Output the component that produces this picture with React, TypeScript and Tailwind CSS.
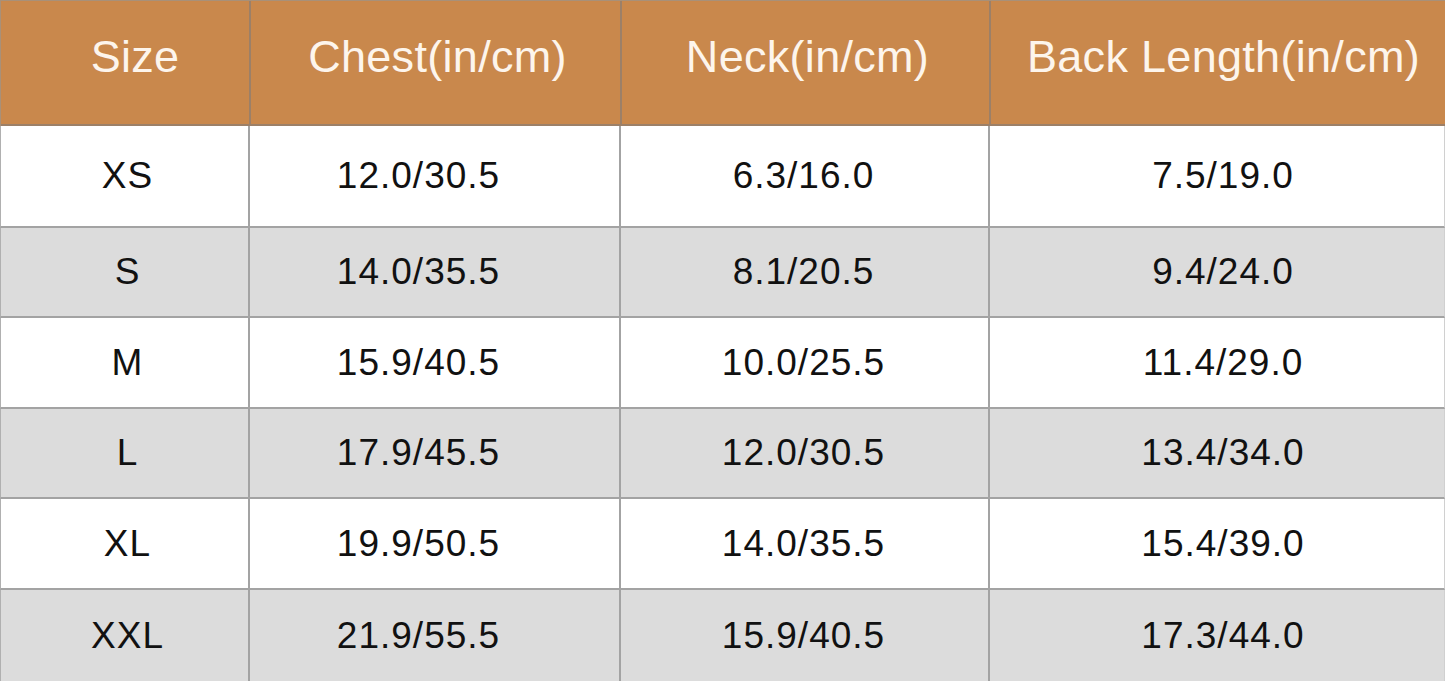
import React from 'react';

const headers = ['Size', 'Chest(in/cm)', 'Neck(in/cm)', 'Back Length(in/cm)'];

const rows: { cells: string[]; h: string }[] = [
  { cells: ['XS', '12.0/30.5', '6.3/16.0', '7.5/19.0'], h: 'h-[102px]' },
  { cells: ['S', '14.0/35.5', '8.1/20.5', '9.4/24.0'], h: 'h-[90px]' },
  { cells: ['M', '15.9/40.5', '10.0/25.5', '11.4/29.0'], h: 'h-[91px]' },
  { cells: ['L', '17.9/45.5', '12.0/30.5', '13.4/34.0'], h: 'h-[90px]' },
  { cells: ['XL', '19.9/50.5', '14.0/35.5', '15.4/39.0'], h: 'h-[91px]' },
  { cells: ['XXL', '21.9/55.5', '15.9/40.5', '17.3/44.0'], h: 'h-[91px]' },
];

const cols = 'grid grid-cols-[250px_371px_369px_455px]';

// small nudges so the text sits where it does in the chart
const headPad = ['pl-[20px]', 'pl-[4px]', 'pl-[4px]', 'pl-[10px]'];
const bodyPad = ['pl-[6px]', 'pr-[32px]', 'pr-[2px]', 'pl-[12px]'];

const App: React.FC = () => {
  return (
    <div className="w-[1445px] h-[681px] overflow-hidden bg-white font-['Liberation_Sans',Arial,sans-serif]">
      {/* header */}
      <div className={`${cols} h-[126px] bg-[#c9884c] border-t border-l border-[#a89078]`}>
        {headers.map((h, i) => (
          <div
            key={h}
            className={`flex items-center justify-center pb-[12px] text-[45px] tracking-[0.3px] text-[#fdf5ec] border-b-2 border-[#9c8068] ${headPad[i]} ${
              i < 3 ? 'border-r-2' : ''
            }`}
          >
            {h}
          </div>
        ))}
      </div>

      {/* body */}
      {rows.map((r, ri) => (
        <div
          key={r.cells[0]}
          className={`${cols} ${r.h} ${ri % 2 === 1 ? 'bg-[#dcdcdc]' : 'bg-white'}`}
        >
          {r.cells.map((c, ci) => (
            <div
              key={ci}
              className={`flex items-center justify-center text-[37px] tracking-[1px] text-[#111] border-[#a3a3a3] ${bodyPad[ci]} ${
                ri < rows.length - 1 ? 'border-b-2' : ''
              } ${ci < 3 ? 'border-r-2' : 'border-r border-r-[#d0d0d0]'} ${ci === 0 ? 'border-l border-l-[#b0b0b0]' : ''}`}
            >
              {c}
            </div>
          ))}
        </div>
      ))}
    </div>
  );
};

export default App;
